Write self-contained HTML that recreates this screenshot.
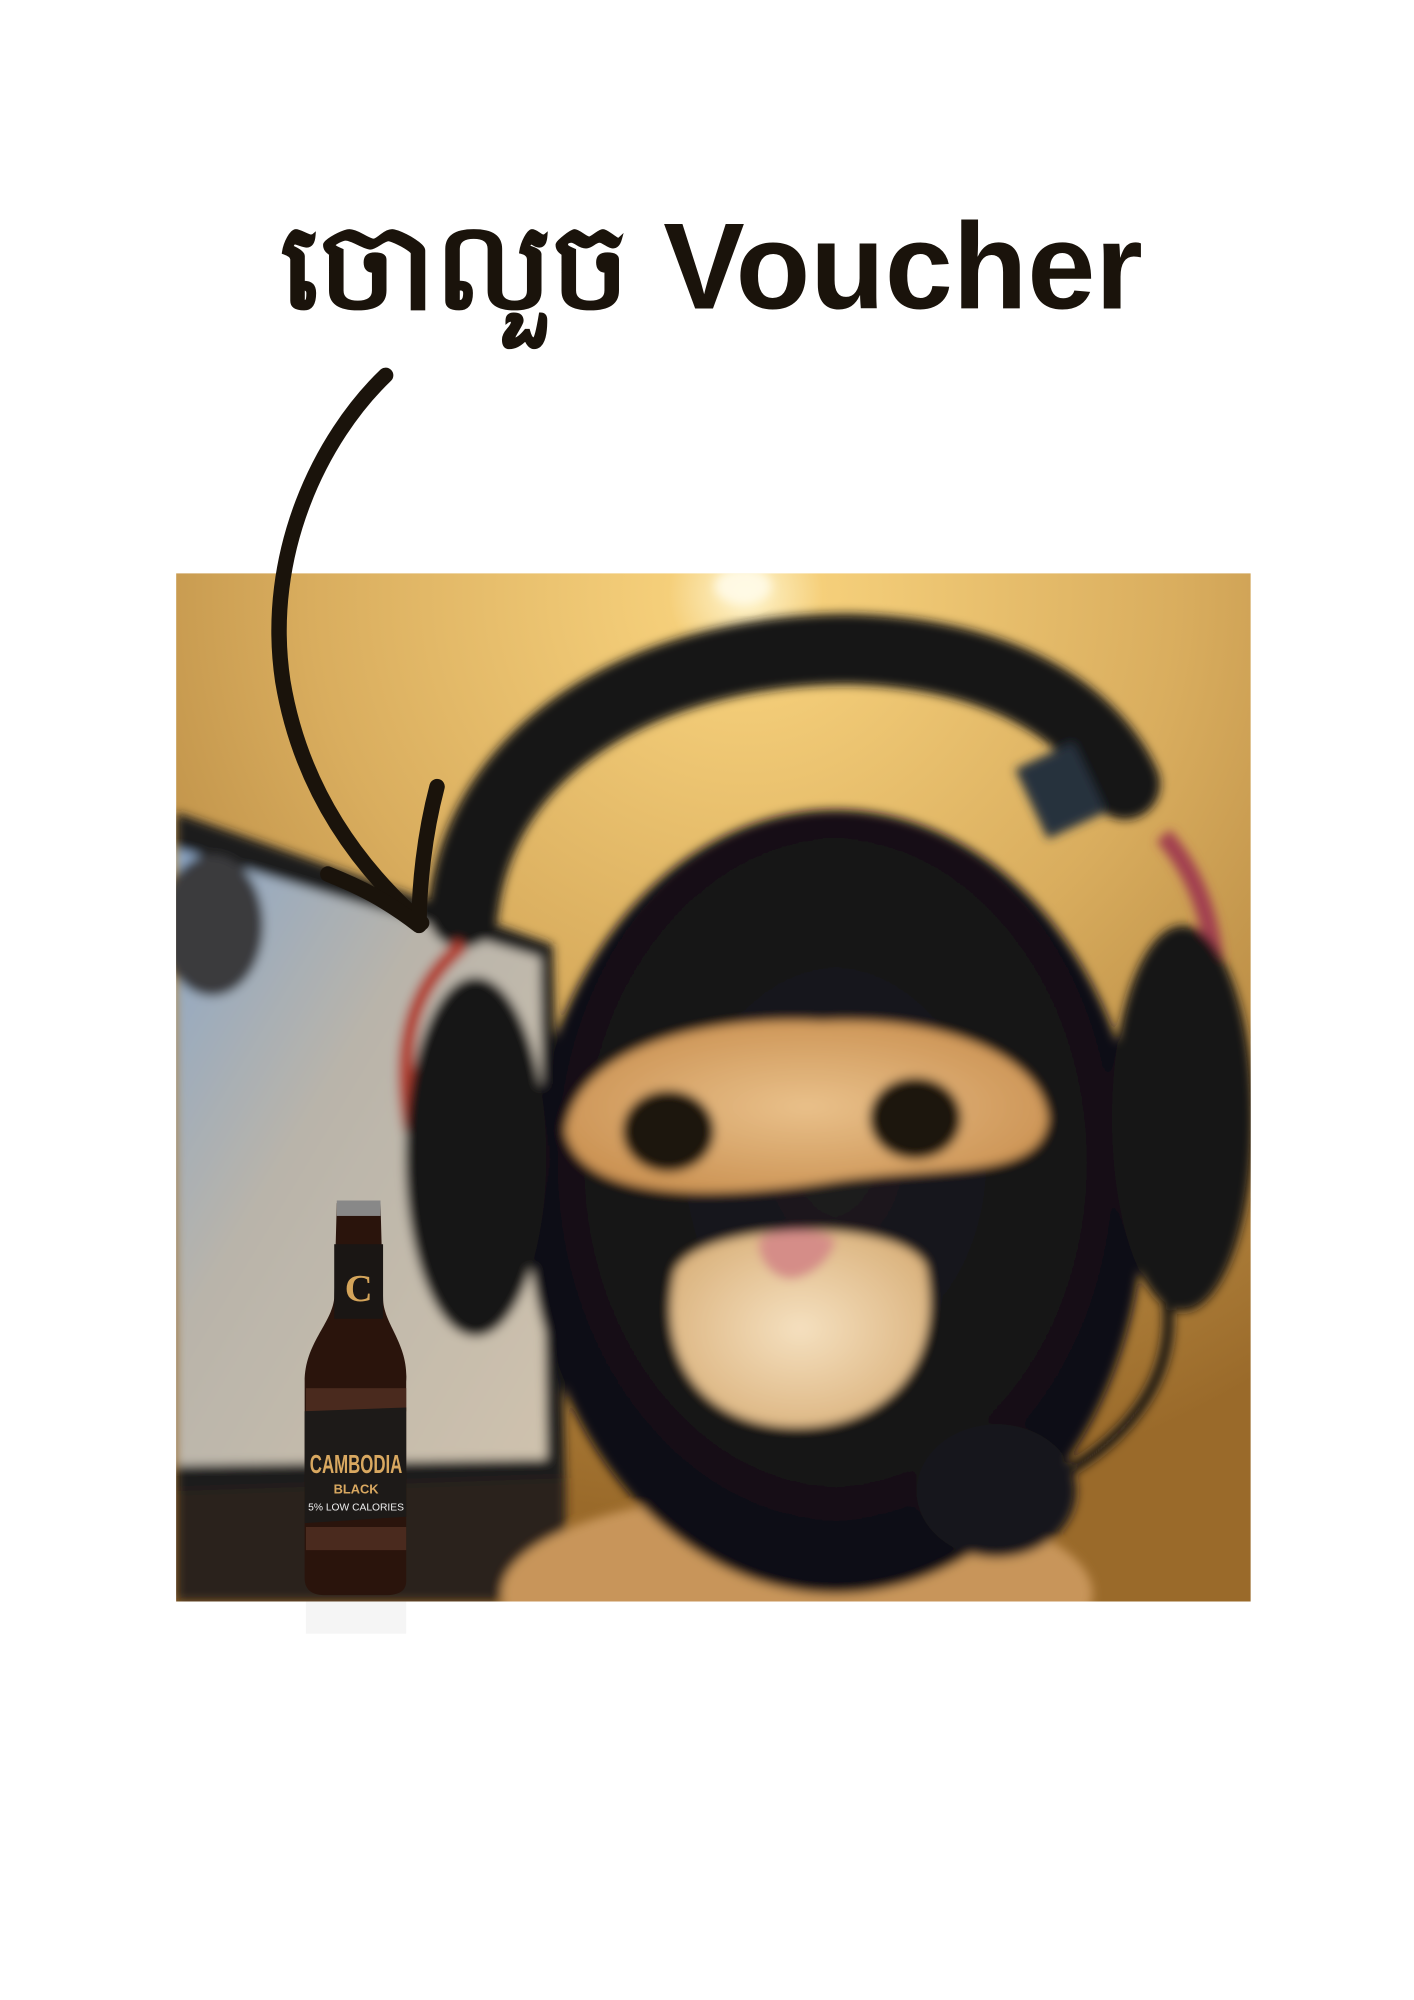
<!DOCTYPE html>
<html><head><meta charset="utf-8"><style>
html,body{margin:0;padding:0;background:#fff;width:1414px;height:2000px;overflow:hidden}
svg{display:block}
</style></head><body>
<svg width="1414" height="2000" viewBox="0 0 1100 1556" preserveAspectRatio="none" xmlns="http://www.w3.org/2000/svg">
<defs>
<radialGradient id="bg" cx="0.53" cy="0.02" r="0.9">
<stop offset="0" stop-color="#fff6d0"/><stop offset="0.08" stop-color="#f5cf7a"/>
<stop offset="0.45" stop-color="#d9ad5e"/><stop offset="1" stop-color="#9a6a2a"/>
</radialGradient>
<radialGradient id="mask" cx="0.5" cy="0.45" r="0.6">
<stop offset="0" stop-color="#1c1b20"/><stop offset="1" stop-color="#0e0d10"/>
</radialGradient>
<linearGradient id="scr" x1="0" y1="0" x2="1" y2="1">
<stop offset="0" stop-color="#8aa6c8"/><stop offset="0.4" stop-color="#b9b4aa"/><stop offset="1" stop-color="#cfc2ad"/>
</linearGradient>
<radialGradient id="eyes" cx="0.5" cy="0.5" r="0.6">
<stop offset="0" stop-color="#e9c08a"/><stop offset="1" stop-color="#c98f4f"/>
</radialGradient>
<radialGradient id="muz" cx="0.5" cy="0.5" r="0.6">
<stop offset="0" stop-color="#f5e0bf"/><stop offset="1" stop-color="#d9b07a"/>
</radialGradient>
<clipPath id="ph"><rect x="137" y="446" width="836" height="800"/></clipPath>
<filter id="bl" x="-10%" y="-10%" width="120%" height="120%"><feGaussianBlur stdDeviation="4"/></filter>
</defs>
<rect width="1100" height="1556" fill="#fff"/>
<text x="218" y="240" font-family="'Liberation Sans','Noto Sans CJK SC',sans-serif" font-weight="700" font-size="95" fill="#1a130b">ចោលួច <tspan x="516">Voucher</tspan></text>
<g clip-path="url(#ph)">
<rect x="137" y="446" width="836" height="800" fill="url(#bg)"/>
<g filter="url(#bl)">
<path d="M137 632 L430 735 L440 1170 L137 1160 Z" fill="#1c1a1a"/>
<path d="M137 660 L420 745 L425 1135 L137 1140 Z" fill="url(#scr)"/>
<ellipse cx="165" cy="720" rx="40" ry="55" fill="#3a3a3e"/>
<path d="M137 1160 L440 1150 L440 1246 L137 1246 Z" fill="#2a221a"/>
<ellipse cx="620" cy="1240" rx="230" ry="80" fill="#c8955a"/>
<path d="M360 710 C375 570 520 505 660 505 C780 508 850 555 875 610" stroke="#141316" stroke-width="55" fill="none" stroke-linecap="round"/>
<rect x="800" y="585" width="50" height="60" fill="#26303d" transform="rotate(-25 825 615)"/>
<path d="M320 880 C305 800 330 760 360 735" stroke="#b04030" stroke-width="12" fill="none"/>
<path d="M905 650 C940 690 950 740 945 810" stroke="#a24050" stroke-width="14" fill="none"/>
<ellipse cx="650" cy="935" rx="240" ry="305" fill="url(#mask)"/>
<ellipse cx="370" cy="900" rx="55" ry="140" fill="#141316"/>
<ellipse cx="920" cy="870" rx="55" ry="150" fill="#141316"/>
<path d="M440 880 C450 810 560 790 640 795 C730 790 810 820 815 870 C810 920 730 905 640 920 C540 935 450 930 440 880 Z" fill="url(#eyes)"/>
<ellipse cx="520" cy="880" rx="36" ry="32" fill="#1a120c"/>
<ellipse cx="712" cy="870" rx="36" ry="32" fill="#1a120c"/>
<path d="M525 990 C540 950 700 945 720 985 C735 1060 690 1110 620 1110 C550 1110 510 1060 525 990 Z" fill="url(#muz)"/>
<path d="M590 965 C600 955 640 955 650 965 C645 985 625 995 615 995 C605 995 590 985 590 965 Z" fill="#d58d88"/>
<path d="M900 980 C930 1060 880 1120 820 1150" stroke="#141316" stroke-width="8" fill="none"/>
<ellipse cx="775" cy="1160" rx="62" ry="52" fill="#18171a"/>
<ellipse cx="578" cy="456" rx="22" ry="14" fill="#fffbe8" opacity="0.9"/>
</g>
<path d="M262 936 L296 936 L298 1010 C298 1030 318 1045 316 1075 L316 1230 C316 1238 310 1241 300 1241 L252 1241 C242 1241 237 1236 237 1228 L237 1075 C237 1045 258 1030 260 1010 Z" fill="#2a140c"/>
<rect x="262" y="934" width="34" height="12" fill="#888"/>
<rect x="260" y="968" width="38" height="58" fill="#1a1614"/>
<text x="279" y="1012" text-anchor="middle" font-family="'Liberation Serif',serif" font-weight="700" font-size="30" fill="#d4a45a">C</text>
<rect x="238" y="1080" width="78" height="18" fill="#4a2a1e"/>
<path d="M237 1098 L316 1095 L316 1180 L237 1185 Z" fill="#1d1a18"/>
<text x="277" y="1146" text-anchor="middle" font-family="'Liberation Sans',sans-serif" font-weight="700" font-size="20" fill="#d9a860" textLength="72" lengthAdjust="spacingAndGlyphs">CAMBODIA</text>
<text x="277" y="1162" text-anchor="middle" font-family="'Liberation Sans',sans-serif" font-weight="700" font-size="10" fill="#d9a860">BLACK</text>
<text x="277" y="1175" text-anchor="middle" font-family="'Liberation Sans',sans-serif" font-size="8" fill="#eee">5% LOW CALORIES</text>
<rect x="238" y="1188" width="78" height="18" fill="#4a2a1e"/>
</g>
<rect x="238" y="1246" width="78" height="25" fill="#eee" opacity="0.6"/>
<path d="M300 292 C250 340 205 430 220 530 C235 620 285 680 328 718" stroke="#1a130b" stroke-width="12" fill="none" stroke-linecap="round"/>
<path d="M340 612 C330 650 326 690 326 720 C300 700 280 690 255 680" stroke="#1a130b" stroke-width="12" fill="none" stroke-linecap="round" stroke-linejoin="round"/>
</svg>
</body></html>
